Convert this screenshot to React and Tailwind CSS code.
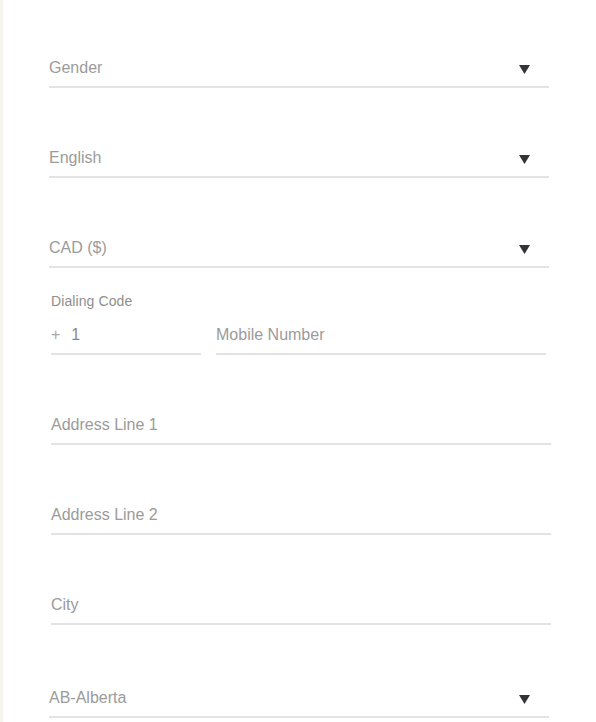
import React from "react";

function Arrow() {
  return (
    <svg width="11" height="9" viewBox="0 0 11 9" className="shrink-0 block">
      <polygon points="0,0 11,0 5.5,9" fill="#333338" />
    </svg>
  );
}

function SelectField({ label, className = "" }) {
  return (
    <div className={"ml-[49px] w-[500px] border-b-2 border-[#e3e3e3] pt-[1px] pb-[8px] flex items-center justify-between leading-[20px] " + className}>
      <span className="text-[16px] leading-[20px] text-[#9b9b9b]">{label}</span>
      <span className="mr-[19px] mt-[3px]"><Arrow /></span>
    </div>
  );
}

function InputField({ label, className = "" }) {
  return (
    <div className={"ml-[51px] w-[500px] border-b-2 border-[#e3e3e3] pt-[1px] pb-[8px] text-[16px] leading-[20px] text-[#9b9b9b] " + className}>
      {label}
    </div>
  );
}

export default function App() {
  return (
    <div className="w-[596px] h-[722px] overflow-hidden bg-white flex" style={{ fontFamily: '"Liberation Sans", Arial, sans-serif' }}>
      <div className="w-[3px] shrink-0 bg-[#f4f4ec]" />
      <div className="flex-1 -ml-[3px] flex flex-col">
        <SelectField label="Gender" className="mt-[57px]" />
        <SelectField label="English" className="mt-[59px]" />
        <SelectField label="CAD ($)" className="mt-[59px]" />
        <div className="ml-[51px] mt-[25px] text-[14px] leading-[16px] text-[#8e8e8e] tracking-[0.1px]">Dialing Code</div>
        <div className="flex mt-[15px] leading-[20px]">
          <div className="ml-[51px] w-[150px] border-b-2 border-[#e3e3e3] pt-[1px] pb-[8px] text-[16px] leading-[20px]">
            <span className="text-[#a8a8a8]">+</span>
            <span className="ml-[11px] text-[#8a8a8a]">1</span>
          </div>
          <div className="ml-[15px] w-[330px] border-b-2 border-[#e3e3e3] pt-[1px] pb-[8px] text-[16px] leading-[20px] text-[#9b9b9b]">Mobile Number</div>
        </div>
        <InputField label="Address Line 1" className="mt-[59px]" />
        <InputField label="Address Line 2" className="mt-[59px]" />
        <InputField label="City" className="mt-[59px]" />
        <SelectField label="AB-Alberta" className="mt-[62px]" />
      </div>
    </div>
  );
}
